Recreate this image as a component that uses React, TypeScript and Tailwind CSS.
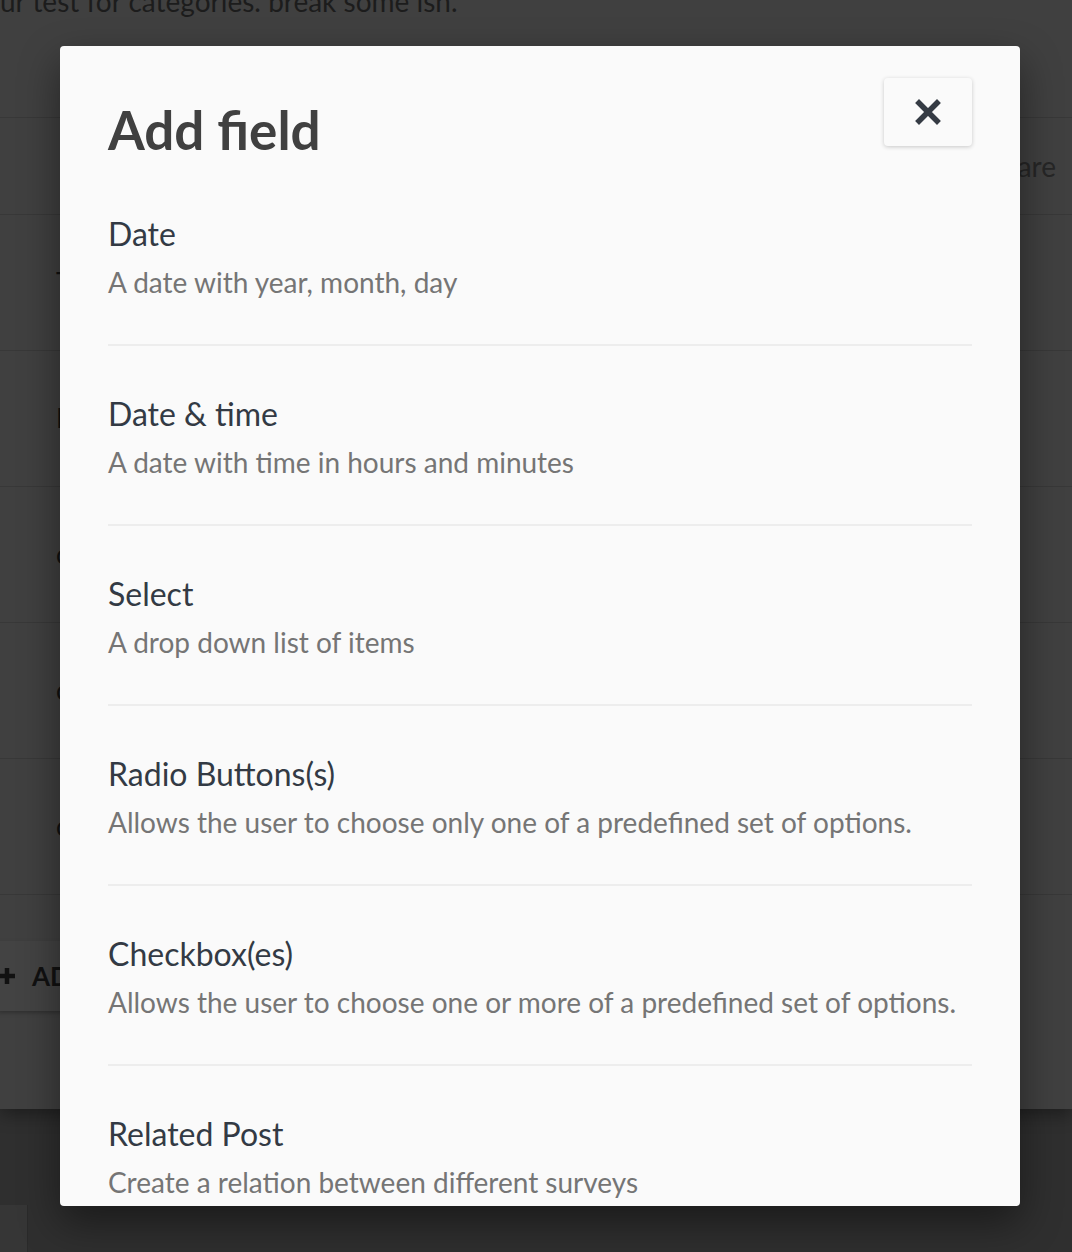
import React from "react";

type FieldType = {
  label: string;
  description: string;
};

const fieldTypes: FieldType[] = [
  { label: "Date", description: "A date with year, month, day" },
  { label: "Date & time", description: "A date with time in hours and minutes" },
  { label: "Select", description: "A drop down list of items" },
  {
    label: "Radio Buttons(s)",
    description: "Allows the user to choose only one of a predefined set of options.",
  },
  {
    label: "Checkbox(es)",
    description: "Allows the user to choose one or more of a predefined set of options.",
  },
  { label: "Related Post", description: "Create a relation between different surveys" },
];

const bgRows = ["Title", "Description", "categories", "checkboxes", "custom"];

function CloseIcon() {
  return (
    <svg width="26" height="26" viewBox="0 0 26 26" fill="none">
      <path d="M4 4 L22 22 M22 4 L4 22" stroke="#353b44" strokeWidth="5.5" strokeLinecap="square" />
    </svg>
  );
}

function PlusIcon() {
  return (
    <svg width="18" height="18" viewBox="0 0 18 18" fill="none">
      <path d="M9 1 V17 M1 9 H17" stroke="#111" strokeWidth="4.5" />
    </svg>
  );
}

export default function App() {
  return (
    <div
      className="relative w-[1072px] h-[1252px] overflow-hidden bg-[#2f2f2f]"
      style={{ fontFamily: "Lato, 'Noto Sans', sans-serif" }}
    >
      {/* page behind the overlay */}
      <div className="bg-[#404040] shadow-[0_6px_16px_rgba(0,0,0,0.35)]">
        <div className="h-[118px] border-b border-[#383838] flex items-start">
          <p className="-mt-[16px] text-[28px] leading-[34px] text-[#1c1c1c] whitespace-nowrap">
            ur test for categories. break some ish.
          </p>
        </div>
        <div className="h-[97px] border-b border-[#383838] flex items-center justify-end pr-[16px]">
          <span className="text-[28px] text-[#262626]">Share</span>
        </div>
        {bgRows.map((r) => (
          <div
            key={r}
            className="h-[136px] border-b border-[#383838] flex items-center pl-[56px] text-[26px] text-[#111]"
          >
            {r}
          </div>
        ))}
        <div className="h-[214px] pt-[46px]">
          <div className="h-[70px] bg-[#434343] flex items-center -ml-[2px] gap-[16px] text-[26px] font-bold text-[#111] shadow-[0_2px_4px_rgba(0,0,0,0.25)] w-[300px]">
            <PlusIcon />
            <span>ADD FIELD</span>
          </div>
        </div>
      </div>
      <div className="mt-[96px] w-[28px] h-[60px] bg-[#363636] border-r border-[#2a2a2a]" />

      {/* modal */}
      <div className="absolute left-[60px] top-[46px] w-[960px] h-[1160px] bg-[#fafafa] rounded-[4px] overflow-hidden shadow-[0_16px_40px_rgba(0,0,0,0.45)]">
        <div className="h-[120px] px-[48px] pt-[32px] flex justify-between items-start">
          <h1 className="mt-[20px] text-[53px] leading-[64px] font-bold text-[#404040]">
            Add field
          </h1>
          <button className="w-[88px] h-[68px] bg-[#fafafa] rounded-[4px] flex items-center justify-center shadow-[0_1px_4px_rgba(0,0,0,0.2)]">
            <CloseIcon />
          </button>
        </div>
        <ul className="px-[48px]">
          {fieldTypes.map((f) => (
            <li key={f.label} className="pt-[48px] pb-[44px] border-b-2 border-[#ededed]">
              <div className="text-[32px] leading-[40px] text-[#333a44]">{f.label}</div>
              <div className="mt-[10px] text-[28px] leading-[36px] text-[#757575]">{f.description}</div>
            </li>
          ))}
        </ul>
      </div>
    </div>
  );
}
